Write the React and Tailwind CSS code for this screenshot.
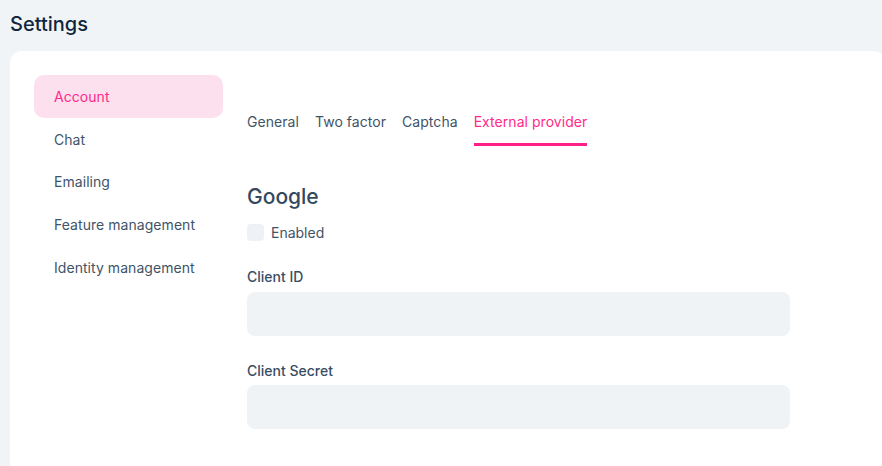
import React, { useState } from "react";

const menu = ["Account", "Chat", "Emailing", "Feature management", "Identity management"];
const tabs = ["General", "Two factor", "Captcha", "External provider"];

export default function App() {
  const [active, setActive] = useState("Account");
  const [tab, setTab] = useState("External provider");
  const [enabled, setEnabled] = useState(false);

  return (
    <div
      className="h-[466px] w-full overflow-hidden bg-[#f0f4f7] pl-[10px]"
      style={{ fontFamily: "Inter, 'Noto Sans', sans-serif" }}
    >
      <h1 className="pt-[10px] text-[20px] leading-[28px] font-medium text-[#10263d]">Settings</h1>

      <div className="mt-[13px] flex h-[440px] w-[876px] rounded-[12px] bg-white pl-[24px] pt-[24px]">
        {/* sidebar */}
        <nav className="flex w-[189px] flex-col">
          {menu.map((item) => (
            <button
              key={item}
              onClick={() => setActive(item)}
              className={
                "h-[42.75px] shrink-0 rounded-[10px] pl-[20px] text-left text-[14px] tracking-[0.05px] " +
                (active === item ? "bg-[#fde0ee] text-[#ff2a8a]" : "text-[#3f5468]")
              }
            >
              {item}
            </button>
          ))}
        </nav>

        {/* content */}
        <div className="ml-[24px] w-[543px] pt-[37px]">
          <div className="flex gap-[16px]">
            {tabs.map((t) => (
              <button
                key={t}
                onClick={() => setTab(t)}
                className={
                  "border-b-[3px] pb-[11px] text-[14px] leading-[20px] tracking-[0.05px] " +
                  (tab === t ? "border-[#ff1f86] text-[#ff2a8a]" : "border-transparent text-[#3f5468]")
                }
              >
                {t}
              </button>
            ))}
          </div>

          <h2 className="mt-[37px] text-[21px] leading-[28px] font-medium text-[#34495e]">Google</h2>

          <label className="mt-[13px] flex h-[17px] items-center gap-[7px] text-[14px] text-[#3f5468]">
            <input
              type="checkbox"
              checked={enabled}
              onChange={(e) => setEnabled(e.target.checked)}
              className="h-[17px] w-[17px] appearance-none rounded-[4px] bg-[#eef2f6]"
            />
            Enabled
          </label>

          <div className="mt-[26px] text-[14px] leading-[20px] font-medium text-[#3a4e63]">Client ID</div>
          <input className="mt-[5px] h-[44px] w-full rounded-[8px] bg-[#eff3f6] px-3 text-[14px] outline-none" />

          <div className="mt-[25px] text-[14px] leading-[20px] font-medium text-[#3a4e63]">Client Secret</div>
          <input className="mt-[4px] h-[44px] w-full rounded-[8px] bg-[#eff3f6] px-3 text-[14px] outline-none" />
        </div>
      </div>
    </div>
  );
}
